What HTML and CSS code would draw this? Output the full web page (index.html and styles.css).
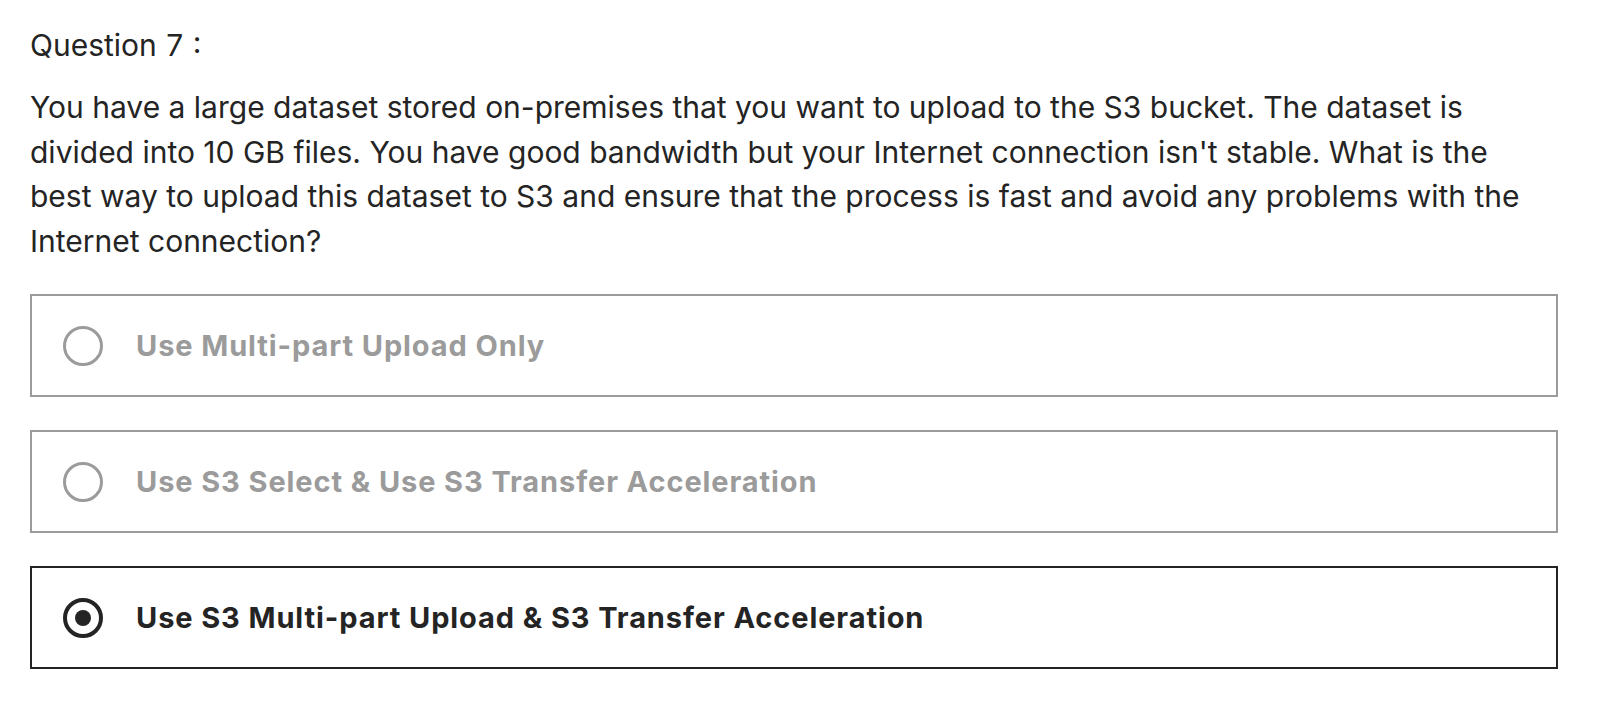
FILE: index.html
```html
<!DOCTYPE html>
<html lang="en">
<head>
<meta charset="utf-8">
<title>Question 7</title>
<link rel="stylesheet" href="styles.css">
</head>
<body>
<main class="quiz">
  <h2 class="q-title">Question 7 :</h2>
  <p class="q-text">You have a large dataset stored on-premises that you want to upload to the S3 bucket. The dataset is divided into 10 GB files. You have good bandwidth but your Internet connection isn't stable. What is the best way to upload this dataset to S3 and ensure that the process is fast and avoid any problems with the Internet connection?</p>
  <ul class="options">
    <li class="option">
      <span class="radio"></span>
      <span class="label">Use Multi-part Upload Only</span>
    </li>
    <li class="option">
      <span class="radio"></span>
      <span class="label">Use S3 Select &amp; Use S3 Transfer Acceleration</span>
    </li>
    <li class="option selected">
      <span class="radio"></span>
      <span class="label">Use S3 Multi-part Upload &amp; S3 Transfer Acceleration</span>
    </li>
  </ul>
</main>
</body>
</html>
```
FILE: styles.css
```css
html, body {
  margin: 0;
  padding: 0;
  background: #ffffff;
}

body {
  font-family: Inter, "Liberation Sans", Arial, sans-serif;
  color: #242424;
}

.quiz {
  width: 1528px;
  padding: 23px 0 0 30px;
}

.q-title {
  margin: 0;
  font-size: 30px;
  font-weight: 400;
  line-height: 44px;
  word-spacing: 1px;
}

.q-text {
  margin: 18px 20px 0 0;
  font-size: 30px;
  line-height: 44.5px;
}

.options {
  list-style: none;
  margin: 31px 0 0 0;
  padding: 0;
  display: flex;
  flex-direction: column;
  gap: 33px;
}

.option {
  box-sizing: border-box;
  height: 103px;
  border: 2px solid #9b9b9b;
  display: flex;
  align-items: center;
  padding-left: 31px;
  color: #9b9b9b;
}

.option.selected {
  border-color: #242424;
  color: #242424;
}

.radio {
  box-sizing: border-box;
  width: 40px;
  height: 40px;
  border: 3.5px solid #9b9b9b;
  border-radius: 50%;
  flex: none;
  display: flex;
  align-items: center;
  justify-content: center;
}

.option.selected .radio {
  border: 4px solid #242424;
}

.option.selected .radio::after {
  content: "";
  width: 16px;
  height: 16px;
  border-radius: 50%;
  background: #242424;
}

.label {
  margin-left: 33px;
  font-size: 29px;
  font-weight: 700;
  letter-spacing: 0.9px;
  line-height: 36px;
}
```
